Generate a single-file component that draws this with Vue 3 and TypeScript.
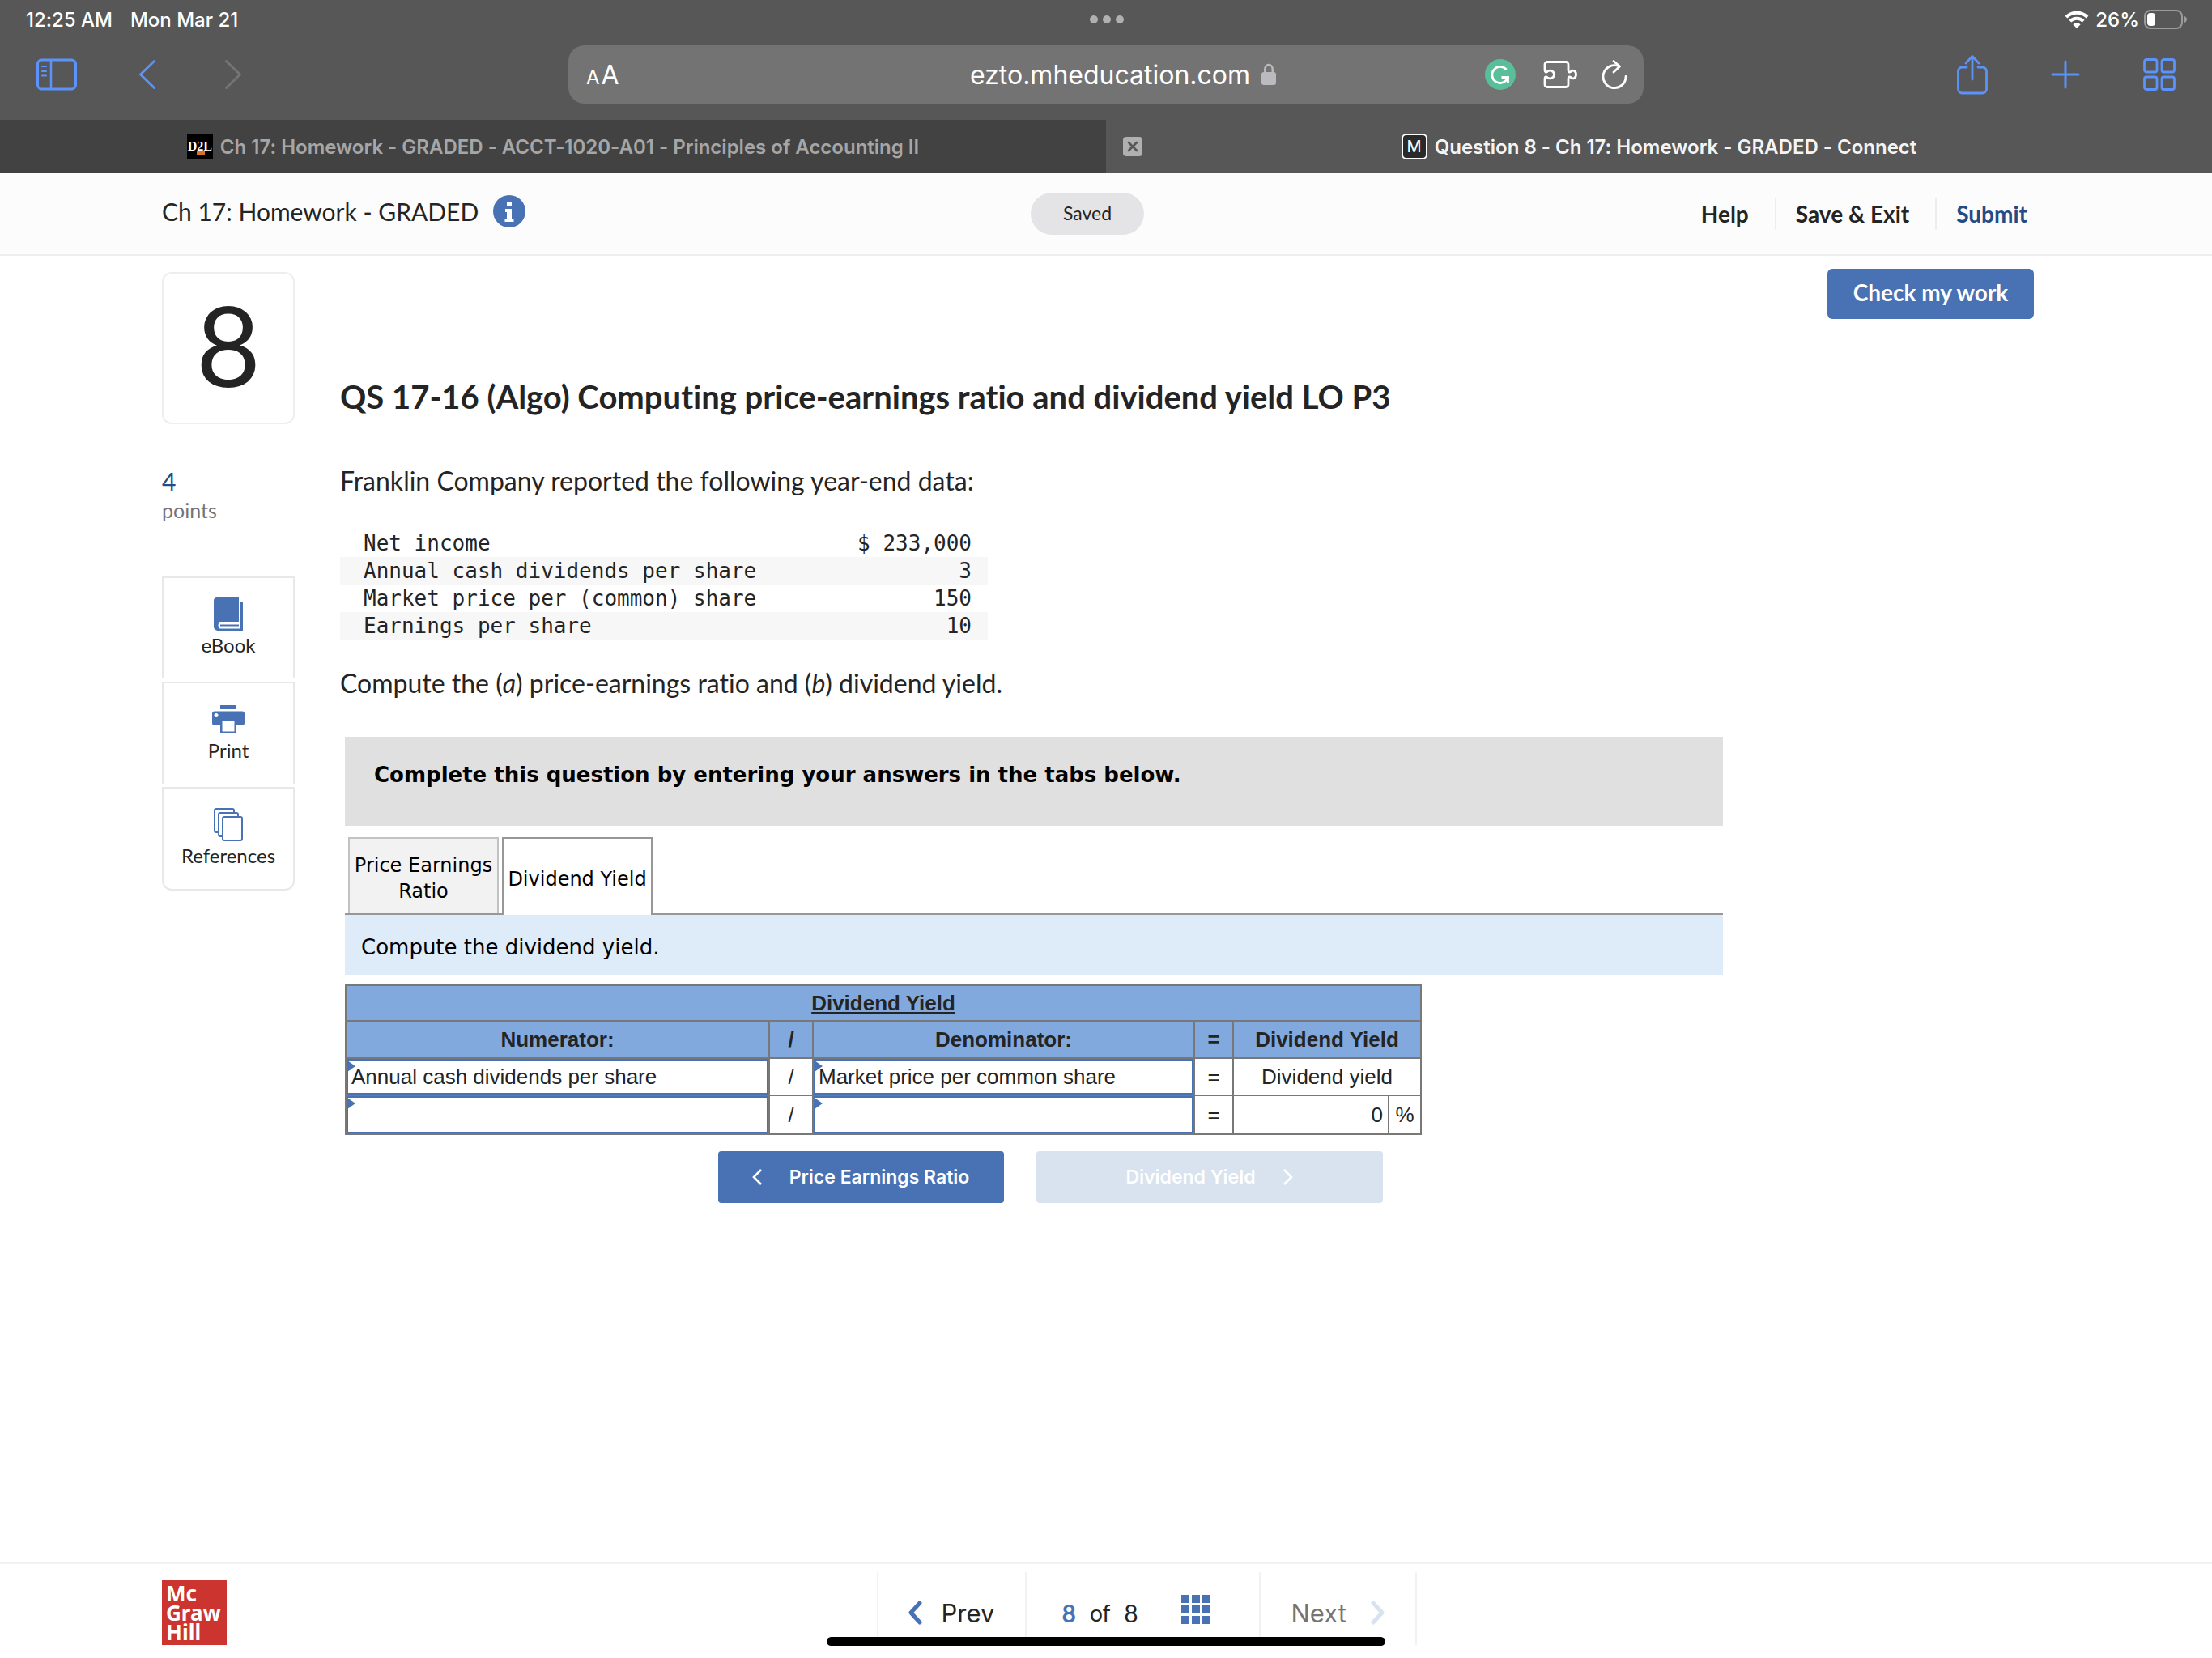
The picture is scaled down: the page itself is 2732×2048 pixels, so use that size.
<script setup lang="ts">
import { ref } from 'vue'

interface DataRow {
  label: string
  value: string
}

const reported: DataRow[] = [
  { label: 'Net income', value: '$ 233,000' },
  { label: 'Annual cash dividends per share', value: '3' },
  { label: 'Market price per (common) share', value: '150' },
  { label: 'Earnings per share', value: '10' },
]

const numeratorName = ref('Annual cash dividends per share')
const denominatorName = ref('Market price per common share')
const numeratorValue = ref('')
const denominatorValue = ref('')
</script>

<template>
  <div class="screen">
    <header class="browser">
      <div class="status">
        <div class="status-left"><span>12:25 AM</span><span>Mon Mar 21</span></div>
        <div class="dots"><i></i><i></i><i></i></div>
        <div class="status-right">
          <svg width="30" height="22" viewBox="0 0 30 22" fill="none" stroke="#fff" stroke-width="4">
            <path d="M2 8.200a18.400 18.400 0 0 1 26 0" />
            <path d="M6.800 13.200a11.600 11.600 0 0 1 16.400 0" />
            <path d="M15 22l-4.600-4.800a6.600 6.600 0 0 1 9.200 0z" fill="#fff" stroke="none" />
          </svg>
          <span class="percent">26%</span>
          <svg width="54" height="24" viewBox="0 0 54 24" fill="none">
            <rect x="1" y="1" width="46" height="22" rx="7" stroke="#9b9b9b" stroke-width="2" />
            <rect x="4" y="4" width="10" height="16" rx="4" fill="#fff" />
            <path d="M50 8c4 1.500 4 6.500 0 8z" fill="#9b9b9b" />
          </svg>
        </div>
      </div>

      <div class="toolbar">
        <div class="tools-left">
          <button type="button" aria-label="Show sidebar">
            <svg width="50" height="40" viewBox="0 0 50 40" fill="none" stroke="#5b93fb" stroke-width="3" stroke-linecap="round">
              <rect x="1.500" y="2" width="47" height="36" rx="5" />
              <path d="M18 2v36" stroke-width="2.500" />
              <path d="M7 10h5M7 16h5M7 21.500h5" stroke-width="2.200" />
            </svg>
          </button>
          <button type="button" aria-label="Back">
            <svg width="22" height="38" viewBox="0 0 22 38" fill="none" stroke="#5b93fb" stroke-width="3" stroke-linecap="round" stroke-linejoin="round">
              <path d="M19.500 2.500L2.500 19l17 16.500" />
            </svg>
          </button>
          <button type="button" aria-label="Forward">
            <svg width="22" height="38" viewBox="0 0 22 38" fill="none" stroke="#747474" stroke-width="3" stroke-linecap="round" stroke-linejoin="round">
              <path d="M2.500 2.500l17 16.500-17 16.500" />
            </svg>
          </button>
        </div>

        <div class="address">
          <button type="button" class="text-size" aria-label="Page settings"><small>A</small>A</button>
          <div class="url">
            <span>ezto.mheducation.com</span>
            <svg width="18" height="28" viewBox="0 0 18 28" fill="none">
              <path d="M4.300 13V7.500a4.700 5.500 0 0 1 9.400 0V13" stroke="#bbbabf" stroke-width="2.400" />
              <rect x="0" y="11" width="18" height="16" rx="3" fill="#bbbabf" />
            </svg>
          </div>
          <div class="address-tools">
            <button type="button" class="assistant" aria-label="Writing assistant">
              <svg width="38" height="38" viewBox="0 0 38 38" fill="none">
                <circle cx="19" cy="19" r="19" fill="#59bf9b" />
                <path d="M26.500 13A10 10 0 1 0 28 23.500M20.500 22.500h8v7.500" stroke="#fff" stroke-width="2.800" />
              </svg>
            </button>
            <button type="button" aria-label="Extensions">
              <svg width="42" height="34" viewBox="0 0 42 34" fill="none" stroke="#fff" stroke-width="2.800" stroke-linejoin="round">
                <path d="M5 1.500h23a3 3 0 0 1 3 3v7.500c0 2.500 2 2.500 3.200 1.200 2.600-2.400 6.300-.6 6.300 3.800s-3.700 6.200-6.300 3.800c-1.200-1.300-3.200-1.300-3.200 1.200v7.500a3 3 0 0 1-3 3H5a3 3 0 0 1-3-3v-7.500c0-2.500 2-2.500 3.200-1.200 2.600 2.400 8.300.6 8.300-3.800s-5.700-6.200-8.300-3.800C4 14.500 2 14.500 2 12V4.500a3 3 0 0 1 3-3z" />
              </svg>
            </button>
            <button type="button" aria-label="Reload">
              <svg width="32" height="38" viewBox="0 0 32 38" fill="none" stroke="#fff" stroke-width="2.800" stroke-linecap="round" stroke-linejoin="round">
                <path d="M30 21.500A14 14 0 1 1 22 9" />
                <path d="M15 2.500l7.500 6.500-7.500 7" />
              </svg>
            </button>
          </div>
        </div>

        <div class="tools-right">
          <button type="button" aria-label="Share">
            <svg width="38" height="50" viewBox="0 0 38 50" fill="none" stroke="#5b93fb" stroke-width="2.800" stroke-linecap="round" stroke-linejoin="round">
              <path d="M12 16H6.500a5 5 0 0 0-5 5v22a5 5 0 0 0 5 5h25a5 5 0 0 0 5-5V21a5 5 0 0 0-5-5H26M19 31V3M11 11l8-8.500 8 8.500" />
            </svg>
          </button>
          <button type="button" aria-label="New tab">
            <svg width="36" height="36" viewBox="0 0 36 36" stroke="#5b93fb" stroke-width="3" stroke-linecap="round">
              <path d="M18 2v32M2 18h32" />
            </svg>
          </button>
          <button type="button" aria-label="Tab overview">
            <svg width="40" height="40" viewBox="0 0 40 40" fill="none" stroke="#5b93fb" stroke-width="2.800">
              <rect x="1.500" y="1.500" width="15.500" height="15.500" rx="2.500" />
              <rect x="23" y="1.500" width="15.500" height="15.500" rx="2.500" />
              <rect x="1.500" y="23" width="15.500" height="15.500" rx="2.500" />
              <rect x="23" y="23" width="15.500" height="15.500" rx="2.500" />
            </svg>
          </button>
        </div>
      </div>

      <div class="tabs">
        <div class="tab tab-idle">
          <div class="tab-title">
            <span class="fav fav-d2l">D2L<i></i></span>
            <span>Ch 17: Homework - GRADED - ACCT-1020-A01 - Principles of Accounting II</span>
          </div>
        </div>
        <div class="tab">
          <button type="button" class="close" aria-label="Close tab">
            <svg width="24" height="24" viewBox="0 0 24 24">
              <rect width="24" height="24" rx="4" fill="#b0b0b0" />
              <path d="M7 7l10 10M17 7L7 17" stroke="#575757" stroke-width="2.600" stroke-linecap="round" />
            </svg>
          </button>
          <div class="tab-title">
            <span class="fav fav-m">M</span>
            <span>Question 8 - Ch 17: Homework - GRADED - Connect</span>
          </div>
        </div>
      </div>
    </header>

    <div class="bar">
      <div class="bar-title">
        <span>Ch 17: Homework - GRADED</span>
        <button type="button" aria-label="Assignment information">
          <svg width="40" height="40" viewBox="0 0 40 40">
            <circle cx="20" cy="20" r="20" fill="#4872b3" />
            <path d="M17 8h6v5h-6zM15 17h8v12h2.500v4h-11v-4H17v-8h-2z" fill="#fff" />
          </svg>
        </button>
      </div>
      <div class="saved">Saved</div>
      <nav class="bar-links">
        <a href="#">Help</a>
        <a href="#">Save &amp; Exit</a>
        <a href="#" class="submit">Submit</a>
      </nav>
    </div>

    <main class="page">
      <aside class="side">
        <div class="number">8</div>
        <div class="points"><b>4</b>points</div>
        <div class="resources">
          <button type="button" class="resource">
            <svg width="36" height="42" viewBox="0 0 36 42">
              <path d="M4 0h27v30H7.500a5.500 5.500 0 0 0 0 8.500H33V5h3v36H5a5 5 0 0 1-5-5V4a4 4 0 0 1 4-4z" fill="#4872b3" />
              <path d="M8 34.500h23" stroke="#4872b3" stroke-width="2" />
            </svg>
            eBook
          </button>
          <button type="button" class="resource">
            <svg width="40" height="42" viewBox="0 0 40 42">
              <path d="M10 3h20v5H10zM3 10.500h34a3 3 0 0 1 3 3V25a3 3 0 0 1-3 3h-7v10H10V28H3a3 3 0 0 1-3-3V13.500a3 3 0 0 1 3-3z" fill="#4872b3" />
              <path d="M12.500 23h15v12.500h-15z" fill="#fff" />
              <circle cx="5" cy="15.500" r="2.500" fill="#fff" />
            </svg>
            Print
          </button>
          <button type="button" class="resource">
            <svg width="36" height="42" viewBox="0 0 36 42" fill="#fff" stroke="#4872b3" stroke-width="2">
              <rect x="1" y="1" width="24" height="29" rx="2" />
              <rect x="6" y="6" width="24" height="29" rx="2" />
              <rect x="11" y="11" width="24" height="29" rx="2" />
            </svg>
            References
          </button>
        </div>
      </aside>

      <section class="question">
        <button type="button" class="check">Check my work</button>
        <h1>QS 17-16 (Algo) Computing price-earnings ratio and dividend yield LO P3</h1>
        <p class="intro">Franklin Company reported the following year-end data:</p>
        <table class="data">
          <tbody>
            <tr v-for="row in reported" :key="row.label">
              <th scope="row">{{ row.label }}</th>
              <td>{{ row.value }}</td>
            </tr>
          </tbody>
        </table>
        <p class="task">Compute the (<em>a</em>) price-earnings ratio and (<em>b</em>) dividend yield.</p>

        <div class="worksheet">
          <div class="banner">Complete this question by entering your answers in the tabs below.</div>
          <div class="parts" role="tablist">
            <button type="button" role="tab" aria-selected="false" class="part">Price Earnings Ratio</button>
            <button type="button" role="tab" aria-selected="true" class="part part-active">Dividend Yield</button>
          </div>
          <div class="prompt">Compute the dividend yield.</div>

          <table class="answers">
            <colgroup>
              <col class="c-num" /><col class="c-slash" /><col class="c-den" />
              <col class="c-eq" /><col class="c-result" /><col class="c-unit" />
            </colgroup>
            <thead>
              <tr class="r-title"><th colspan="6"><u>Dividend Yield</u></th></tr>
              <tr>
                <th>Numerator:</th><th>/</th><th>Denominator:</th><th>=</th><th colspan="2">Dividend Yield</th>
              </tr>
            </thead>
            <tbody>
              <tr>
                <td class="entry"><input v-model="numeratorName" type="text" aria-label="Numerator name" /></td>
                <td>/</td>
                <td class="entry"><input v-model="denominatorName" type="text" aria-label="Denominator name" /></td>
                <td>=</td>
                <td colspan="2">Dividend yield</td>
              </tr>
              <tr class="r-values">
                <td class="entry"><input v-model="numeratorValue" type="text" aria-label="Numerator amount" /></td>
                <td>/</td>
                <td class="entry"><input v-model="denominatorValue" type="text" aria-label="Denominator amount" /></td>
                <td>=</td>
                <td class="result">0</td>
                <td>%</td>
              </tr>
            </tbody>
          </table>

          <div class="steps">
            <button type="button" class="step step-back">
              <svg width="12" height="20" viewBox="0 0 12 20" fill="none" stroke="#fff" stroke-width="2.600"><path d="M11 1L2 10l9 9" /></svg>
              Price Earnings Ratio
            </button>
            <button type="button" class="step step-next" disabled>
              Dividend Yield
              <svg width="12" height="20" viewBox="0 0 12 20" fill="none" stroke="#fff" stroke-width="2.600"><path d="M1 1l9 9-9 9" /></svg>
            </button>
          </div>
        </div>
      </section>
    </main>

    <footer class="footer">
      <div class="brand">Mc<br />Graw<br />Hill</div>
      <nav class="pager">
        <button type="button" class="pager-prev">
          <svg width="18" height="30" viewBox="0 0 18 30" fill="none" stroke="#4872b3" stroke-width="5" stroke-linecap="round" stroke-linejoin="round"><path d="M15 3L4 15l11 12" /></svg>
          Prev
        </button>
        <div class="pager-count">
          <b>8</b><span class="of">of</span><span>8</span>
          <button type="button" aria-label="All questions">
            <svg width="36" height="36" viewBox="0 0 36 36" fill="#4872b3">
              <path d="M0 0h10v10H0zM13 0h10v10H13zM26 0h10v10H26zM0 13h10v10H0zM13 13h10v10H13zM26 13h10v10H26zM0 26h10v10H0zM13 26h10v10H13zM26 26h10v10H26z" />
            </svg>
          </button>
        </div>
        <button type="button" class="pager-next" disabled>
          Next
          <svg width="18" height="30" viewBox="0 0 18 30" fill="none" stroke="#d9e3ef" stroke-width="5" stroke-linecap="round" stroke-linejoin="round"><path d="M3 3l11 12L3 27" /></svg>
        </button>
      </nav>
    </footer>
    <div class="home"></div>
  </div>
</template>

<style>
body {
  margin: 0;
  background: #fff;
}
</style>

<style scoped>
* {
  box-sizing: border-box;
}
.screen {
  position: relative;
  display: flex;
  flex-direction: column;
  min-height: 100vh;
  font-family: Lato, "Open Sans", sans-serif;
  font-variant-ligatures: none;
  color: #242424;
}
button {
  margin: 0;
  padding: 0;
  border: 0;
  background: none;
  color: inherit;
  font: inherit;
}
svg {
  display: block;
  flex: none;
}

/* Browser chrome */
.browser {
  background: #575757;
  color: #fff;
  font-family: Inter, sans-serif;
}
.status {
  display: grid;
  grid-template-columns: 1fr auto 1fr;
  align-items: center;
  height: 48px;
  padding: 0 30px 0 32px;
  font-size: 24px;
  font-weight: 500;
}
.status-left {
  display: flex;
  gap: 22px;
}
.dots {
  display: flex;
  gap: 6px;
}
.dots i {
  width: 10px;
  height: 10px;
  border-radius: 50%;
  background: #b0b0b0;
}
.status-right {
  display: flex;
  justify-content: flex-end;
  align-items: center;
}
.percent {
  margin: 0 6px 0 8px;
}
.toolbar {
  display: grid;
  grid-template-columns: 1fr minmax(0, 1328px) 1fr;
  align-items: center;
  height: 100px;
  padding: 0 45px 12px;
}
.tools-left,
.tools-right {
  display: flex;
  align-items: center;
}
.tools-left {
  gap: 84px;
}
.tools-left button:first-child {
  margin-right: -8px;
}
.tools-right {
  justify-content: flex-end;
  gap: 78px;
}
.address {
  display: grid;
  grid-template-columns: 1fr auto 1fr;
  align-items: center;
  height: 72px;
  padding: 0 20px 0 22px;
  border-radius: 20px;
  background: #737373;
}
.text-size {
  justify-self: start;
  font-size: 32px;
}
.text-size small {
  margin-right: 2px;
  font-size: 24px;
}
.url {
  display: flex;
  align-items: center;
  gap: 14px;
  padding-left: 40px;
  font-size: 32px;
}
.address-tools {
  display: flex;
  justify-content: flex-end;
  align-items: center;
  gap: 30px;
}
.assistant {
  margin-right: 4px;
}
.tabs {
  display: grid;
  grid-template-columns: 1fr 1fr;
}
.tab {
  position: relative;
  display: flex;
  justify-content: center;
  align-items: center;
  height: 66px;
  color: #f4f4f4;
  font-size: 24px;
  font-weight: 600;
}
.tab-idle {
  background: #424242;
  color: #a6a6a6;
}
.tab-title {
  display: flex;
  align-items: center;
  gap: 9px;
  white-space: nowrap;
}
.close {
  position: absolute;
  left: 21px;
}
.fav {
  display: flex;
  flex: none;
  justify-content: center;
  align-items: center;
  width: 32px;
  height: 32px;
  color: #fff;
}
.fav-d2l {
  position: relative;
  background: #000;
  font: bold 16px "Liberation Serif", serif;
}
.fav-d2l i {
  position: absolute;
  bottom: 6px;
  left: 12px;
  width: 10px;
  height: 4px;
  background: #d9722e;
}
.fav-m {
  border: 2px solid #fff;
  border-radius: 6px;
  background: #2a2a2a;
  font-size: 20px;
  font-weight: 400;
}

/* Assignment bar */
.bar {
  display: grid;
  grid-template-columns: 1fr auto 1fr;
  align-items: center;
  height: 102px;
  padding: 0 228px 0 200px;
  border-bottom: 2px solid #eee;
  background: #fcfcfc;
}
.bar-title {
  display: flex;
  align-items: center;
  gap: 18px;
  padding-bottom: 6px;
  font-size: 30px;
  line-height: 40px;
}
.saved {
  width: 140px;
  height: 52px;
  margin-left: -18px;
  border-radius: 26px;
  background: #e4e3e6;
  font-size: 23px;
  line-height: 50px;
  text-align: center;
}
.bar-links {
  display: flex;
  justify-content: flex-end;
}
.bar-links a {
  padding: 0 32px 0 24px;
  border-right: 2px solid #eee;
  color: #242424;
  font-size: 28px;
  font-weight: 700;
  line-height: 40px;
  text-decoration: none;
}
.bar-links .submit {
  padding-right: 0;
  border-right: 0;
  color: #234b86;
}

/* Question */
.page {
  display: flex;
  flex: 1;
  gap: 56px;
  padding: 16px 220px 0 200px;
}
.side {
  flex: none;
  width: 164px;
  padding-top: 4px;
}
.number {
  height: 188px;
  border: 2px solid #eee;
  border-radius: 12px;
  font-size: 138px;
  line-height: 174px;
  text-align: center;
}
.points {
  margin-top: 52px;
  color: #747474;
  font-size: 25px;
  line-height: 36px;
}
.points b {
  display: block;
  color: #234b86;
  font-size: 30px;
  font-weight: 400;
}
.resources {
  display: flex;
  flex-direction: column;
  gap: 4px;
  margin-top: 64px;
}
.resource {
  display: flex;
  flex-direction: column;
  align-items: center;
  gap: 2px;
  height: 126px;
  padding-top: 24px;
  border: 2px solid #e8e8e8;
  border-bottom: 0;
  font-size: 24px;
  line-height: 30px;
}
.resource:last-child {
  height: 128px;
  border-bottom: 2px solid #e8e8e8;
  border-radius: 0 0 12px 12px;
}
.question {
  flex: 1;
  min-width: 0;
}
.check {
  display: block;
  width: 255px;
  height: 62px;
  margin-left: auto;
  padding-bottom: 4px;
  border-radius: 6px;
  background: #4872b3;
  color: #fff;
  font-size: 28px;
  font-weight: 700;
}
h1 {
  margin: 72px 0 0;
  font-size: 40px;
  font-weight: 700;
  line-height: 48px;
}
p {
  margin: 0;
  font-size: 32px;
  line-height: 40px;
}
.intro {
  margin-top: 60px;
}
.task {
  margin-top: 34px;
}
.data {
  width: 800px;
  margin-top: 40px;
  border-collapse: collapse;
  font-family: "DejaVu Sans Mono", monospace;
  font-size: 26px;
  line-height: 34px;
}
.data th {
  padding: 0 0 0 29px;
  font-weight: 400;
  text-align: left;
}
.data td {
  padding: 0 20px 0 0;
  text-align: right;
}
.data tr:nth-child(even) {
  background: #f7f7f7;
}
.worksheet {
  margin: 46px 384px 0 6px;
}
.banner {
  height: 110px;
  padding: 32px 36px 0;
  background: #e0e0e0;
  color: #000;
  font: bold 26px/30px "DejaVu Sans", sans-serif;
}
.parts {
  display: flex;
  gap: 4px;
  height: 96px;
  margin-top: 14px;
  padding-left: 4px;
  border-bottom: 2px solid #979797;
}
.part {
  width: 186px;
  height: 94px;
  padding-top: 6px;
  border: 2px solid #c2c2c2;
  border-bottom: 0;
  background: #f2f2f2;
  color: #000;
  font: 24px/32px "DejaVu Sans", sans-serif;
}
.part-active {
  height: 96px;
  border-color: #979797;
  background: #fff;
}
.prompt {
  height: 74px;
  padding: 24px 20px 0;
  background: #deebf8;
  color: #000;
  font: 26px/32px "DejaVu Sans", sans-serif;
}
.answers {
  width: 1330px;
  max-width: 100%;
  margin-top: 12px;
  border-collapse: collapse;
  table-layout: fixed;
  font: 26px/30px "Liberation Sans", Arial, sans-serif;
}
.c-num { width: 523px; }
.c-slash { width: 54px; }
.c-den { width: 471px; }
.c-eq { width: 48px; }
.c-result { width: 192px; }
.c-unit { width: 40px; }
.answers th,
.answers td {
  height: 46px;
  padding: 0;
  border: 2px solid #787878;
  text-align: center;
}
.answers th {
  background: #82a9dd;
}
.answers .r-title th {
  height: 44px;
}
.answers .r-values td {
  height: 48px;
}
.answers .result {
  padding-right: 6px;
  text-align: right;
}
.answers .entry {
  position: relative;
}
.entry::before {
  position: absolute;
  top: 2px;
  left: 1px;
  border: 7px solid transparent;
  border-right-width: 0;
  border-left: 10px solid #4872b3;
  content: "";
}
.entry input {
  display: block;
  width: 100%;
  height: 44px;
  padding: 0 4px;
  border: 2px solid #4872b3;
  background: #fff;
  color: inherit;
  font: inherit;
}
.r-values .entry input {
  height: 46px;
}
.steps {
  display: flex;
  justify-content: center;
  gap: 40px;
  margin-top: 20px;
  padding-left: 40px;
}
.step {
  display: flex;
  justify-content: center;
  align-items: center;
  gap: 34px;
  height: 64px;
  border-radius: 4px;
  background: #4872b3;
  color: #fff;
  font: 600 23px/30px Inter, sans-serif;
}
.step-back {
  width: 353px;
}
.step-next {
  width: 428px;
  background: #d9e3ef;
}

/* Footer */
.footer {
  display: grid;
  grid-template-columns: 1fr auto 1fr;
  height: 118px;
  padding: 0 200px;
  border-top: 2px solid #f2f2f2;
}
.brand {
  width: 80px;
  height: 80px;
  margin-top: 20px;
  padding: 4px 5px;
  background: #cc342f;
  color: #fff;
  font: bold 26px/24px "Noto Sans", sans-serif;
}
.pager {
  display: flex;
  height: 90px;
  margin-top: 10px;
  padding-left: 100px;
  font-size: 30px;
}
.pager > * {
  display: flex;
  align-items: center;
  padding-top: 10px;
  border-left: 2px solid #f2f2f2;
}
.pager-prev {
  gap: 24px;
  width: 183px;
  padding-left: 36px;
  font: 31px Inter, sans-serif;
}
.pager-count {
  gap: 17px;
  width: 289px;
  padding-left: 44px;
}
.pager-count b {
  color: #4872b3;
}
.of {
  font-size: 28px;
}
.pager-count button {
  margin: -8px 0 0 36px;
}
.pager .pager-next {
  gap: 30px;
  width: 195px;
  padding-left: 38px;
  border-right: 2px solid #f2f2f2;
  color: #747474;
  font: 31px Inter, sans-serif;
}
.home {
  position: absolute;
  right: 0;
  bottom: 15px;
  left: 0;
  width: 690px;
  height: 11px;
  margin: 0 auto;
  border-radius: 6px;
  background: #000;
}
</style>
